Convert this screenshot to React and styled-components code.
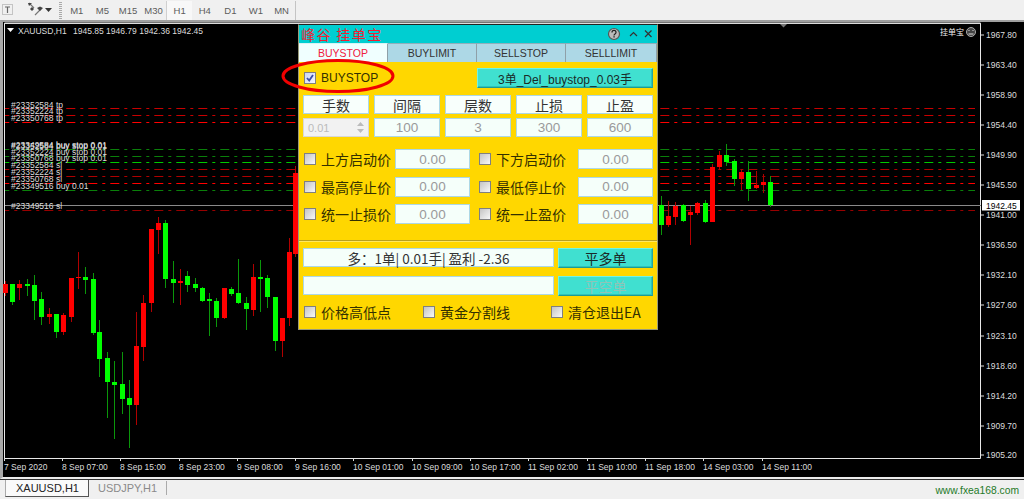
import React from 'react'
import styled, { createGlobalStyle } from 'styled-components'

const latin = '"Liberation Sans", "Noto Sans CJK SC", sans-serif'
const cjk = '"Noto Sans CJK SC", "Liberation Sans", sans-serif'

const Global = createGlobalStyle`
  html, body { margin: 0; padding: 0; background: #f0f0f0; }
  body { font-family: ${latin}; overflow: hidden; }
`

// x, body top, body bottom, wick top, wick bottom, colour
const candles = [
  [5, 284, 293, 281, 296, 'r'], [12, 284, 302, 284, 305, 'g'], [19, 284, 288, 280, 300, 'r'],
  [27, 284, 286, 279, 296, 'g'], [34, 285, 301, 275, 320, 'g'], [41, 299, 317, 292, 325, 'g'],
  [49, 314, 317, 308, 324, 'r'], [56, 314, 332, 314, 338, 'g'], [63, 315, 332, 313, 335, 'r'],
  [71, 278, 317, 278, 322, 'r'], [78, 277, 278, 252, 289, 'r'], [85, 277, 280, 267, 294, 'g'],
  [93, 279, 333, 273, 335, 'g'], [99, 332, 359, 320, 377, 'g'], [107, 358, 382, 352, 418, 'g'],
  [114, 382, 385, 361, 439, 'g'], [122, 384, 399, 352, 414, 'g'], [129, 398, 405, 380, 448, 'g'],
  [136, 346, 405, 312, 425, 'r'], [143, 303, 347, 295, 361, 'r'], [151, 229, 303, 229, 312, 'r'],
  [158, 223, 230, 217, 254, 'r'], [165, 223, 279, 220, 288, 'g'], [173, 279, 283, 261, 303, 'g'],
  [180, 281, 283, 269, 305, 'r'], [187, 276, 285, 271, 292, 'g'], [195, 284, 288, 278, 292, 'g'],
  [202, 288, 301, 287, 302, 'g'], [209, 299, 301, 293, 336, 'g'], [216, 301, 318, 298, 327, 'g'],
  [224, 288, 318, 288, 319, 'r'], [231, 289, 294, 287, 296, 'g'], [238, 293, 303, 259, 304, 'g'],
  [246, 303, 309, 297, 330, 'g'], [253, 277, 310, 264, 316, 'r'], [260, 277, 279, 260, 312, 'g'],
  [267, 278, 297, 275, 308, 'g'], [275, 297, 341, 297, 351, 'g'], [282, 318, 341, 318, 357, 'r'],
  [289, 252, 318, 238, 326, 'r'], [295, 173, 254, 166, 257, 'r'],
  [661, 205, 225, 196, 235, 'g'], [668, 216, 225, 201, 227, 'r'], [675, 206, 217, 202, 225, 'r'],
  [683, 205, 221, 204, 222, 'g'], [690, 212, 215, 206, 245, 'r'], [697, 203, 213, 202, 215, 'r'],
  [705, 203, 222, 200, 223, 'g'], [712, 167, 222, 164, 222, 'r'], [719, 155, 167, 151, 170, 'r'],
  [726, 155, 162, 144, 166, 'g'], [734, 161, 179, 159, 186, 'g'], [741, 172, 179, 169, 190, 'r'],
  [748, 172, 189, 161, 201, 'g'], [756, 185, 188, 171, 189, 'r'], [763, 182, 185, 174, 193, 'r'],
  [770, 182, 205, 176, 207, 'g'],
]

const orderLines = [
  [108.5, '#c80000'], [115.5, '#c80000'], [122.5, '#ff0000'],
  [149.5, '#0a800a'], [156.5, '#0a800a'], [162.5, '#00c800'],
  [169.5, '#b00000'], [176.5, '#b00000'], [183.5, '#ff0000'],
  [190.5, '#0a800a'], [210.5, '#980000'],
]

const orderLabels = [
  ['#23352584 tp', 107.5], ['#23352224 tp', 114], ['#23350768 tp', 120.5],
  ['#23349584 buy stop 0.01', 148], ['#23352584 buy stop 0.01', 148.5],
  ['#23352224 buy stop 0.01', 154.5], ['#23350768 buy stop 0.01', 161],
  ['#23352584 sl', 167.5], ['#23352224 sl', 174.5], ['#23350768 sl', 181.5],
  ['#23349516 buy 0.01', 188.5], ['#23349516 sl', 208.5],
]

const prices = [
  ['1967.80', 35], ['1963.40', 65], ['1958.90', 95], ['1954.40', 125], ['1949.90', 155],
  ['1945.50', 185], ['1941.00', 215], ['1936.50', 245], ['1932.10', 275], ['1927.60', 305],
  ['1923.10', 336], ['1918.60', 366], ['1914.20', 396], ['1909.70', 426], ['1905.20', 455],
]

const times = [
  ['7 Sep 2020', 4], ['8 Sep 07:00', 62], ['8 Sep 15:00', 120], ['8 Sep 23:00', 179],
  ['9 Sep 08:00', 237], ['9 Sep 16:00', 295], ['10 Sep 01:00', 353], ['10 Sep 09:00', 412],
  ['10 Sep 17:00', 470], ['11 Sep 02:00', 528], ['11 Sep 10:00', 587], ['11 Sep 18:00', 645],
  ['14 Sep 03:00', 703], ['14 Sep 11:00', 762],
]

const periods = ['M1', 'M5', 'M15', 'M30', 'H1', 'H4', 'D1', 'W1', 'MN']

export default function App() {
  return (
    <Page>
      <Global />
      <Toolbar>
        <ToolIcon width="24" height="20" viewBox="0 0 24 20">
          <rect x="2.5" y="4.5" width="10" height="10" fill="none" stroke="#999" strokeDasharray="1 1" />
          <path d="M5 7h5M7.5 7v6" stroke="#666" strokeWidth="1.2" fill="none" />
        </ToolIcon>
        <ToolIcon width="34" height="20" viewBox="0 0 34 20">
          <path d="M5 3l5 5M11 15l5-5" stroke="#777" strokeWidth="1.2" fill="none" />
          <path d="M4 3h4l-3 3zM13 8l3 3 3-3-3-1.5zM6 9l2 2 2-2-2-2z" fill="#444" />
          <path d="M21 8h7l-3.5 4z" fill="#333" />
        </ToolIcon>
        <Grip />
        {periods.map(p => <Period key={p} $active={p === 'H1'}>{p}</Period>)}
        <ToolEnd />
      </Toolbar>

      <Chart>
        <ChartSvg viewBox="3 22 1021 455">
          <path d="M4.5 23v435.5H980.5V23z" fill="none" stroke="#e8e8e8" />
          <path d="M4 23.5H981" stroke="#ddd" />
          {prices.map(([label, y]) => <path key={label} d={`M981 ${y}h3`} stroke="#ddd" />)}
          {times.map(([label, x]) => <path key={label} d={`M${x + 0.5} 458v3`} stroke="#ddd" />)}
          <path d="M7 28h7l-3.5 4z" fill="#fff" />
          <path d="M780 24h7l-3.5 3.5z" fill="#777" />

          {orderLines.map(([y, color]) => (
            <line key={y} x1="5" x2="975" y1={y} y2={y} stroke={color} strokeDasharray="9 5 3 5" strokeDashoffset="4.7" />
          ))}
          <line x1="5" x2="981" y1="205.5" y2="205.5" stroke="#8a8a8a" />

          {candles.map(([x, top, bottom, wickTop, wickBottom, c]) => (
            <g key={x}>
              <line x1={x + 0.5} x2={x + 0.5} y1={wickTop} y2={wickBottom} stroke={c === 'g' ? '#0a960a' : '#b00000'} />
              <rect x={x - 2} y={top} width="5" height={bottom - top} fill={c === 'g' ? '#00ff00' : '#ff0000'} />
            </g>
          ))}

          <ChartText x="18" y="33.5">XAUUSD,H1</ChartText>
          <ChartText x="73" y="33.5">1945.85 1946.79 1942.36 1942.45</ChartText>
          {orderLabels.map(([label, y]) => <ChartText key={label + y} x="11" y={y}>{label}</ChartText>)}
          {prices.map(([label, y]) => <ChartText key={label} x="986" y={y + 3}>{label}</ChartText>)}
          {times.map(([label, x]) => <ChartText key={label} x={x} y="470">{label}</ChartText>)}

          <rect x="982" y="200" width="38" height="10.5" fill="#fff" />
          <ChartText x="986" y="208.5" fill="#000">1942.45</ChartText>

          <SmallCjk x="940" y="35">挂单宝</SmallCjk>
          <circle cx="971" cy="32" r="4.5" fill="#444" stroke="#aaa" />
          <path d="M968.5 30.5h1M972.5 30.5h1M968.5 34h5" stroke="#ddd" fill="none" />
        </ChartSvg>
      </Chart>

      <Panel>
        <TitleBar>
          <Title>峰谷 挂单宝</Title>
          <WindowIcons width="50" height="18" viewBox="0 0 50 18">
            <circle cx="8" cy="9" r="5.5" fill="#bbb" stroke="#555" strokeWidth="1.2" />
            <path d="M6 7.4c0-2.6 4-2.6 4 0 0 1.6-2 1.5-2 3" fill="none" stroke="#222" strokeWidth="1.2" />
            <rect x="7.4" y="11.2" width="1.3" height="1.3" fill="#222" />
            <path d="M24 11l3.5-3.5L31 11" fill="none" stroke="#333" strokeWidth="1.2" />
            <path d="M39 5.5l6.5 6.5M45.5 5.5L39 12" fill="none" stroke="#333" strokeWidth="1.2" />
          </WindowIcons>
        </TitleBar>

        <Tabs>
          <Tab $active>BUYSTOP</Tab>
          <Tab>BUYLIMIT</Tab>
          <Tab>SELLSTOP</Tab>
          <Tab>SELLLIMIT</Tab>
        </Tabs>

        <Body>
          <TopRow>
            <CheckLabel $latin>
              <Box $checked>
                <svg width="10" height="10" viewBox="0 0 10 10">
                  <path d="M2 5l2.2 2.6L8 2" fill="none" stroke="#3c4fa8" strokeWidth="1.8" />
                </svg>
              </Box>
              BUYSTOP
            </CheckLabel>
            <TealButton $wide>3单_Del_buystop_0.03手</TealButton>
          </TopRow>

          <ParamGrid>
            {['手数', '间隔', '层数', '止损', '止盈'].map(t => <HeadCell key={t}>{t}</HeadCell>)}
            <Spinner>
              0.01
              <svg width="9" height="15" viewBox="0 0 9 15">
                <path d="M1 6l3.5-4L8 6zM1 9l3.5 4L8 9z" fill="#bbb" />
              </svg>
            </Spinner>
            {['100', '3', '300', '600'].map(v => <Field key={v}>{v}</Field>)}
          </ParamGrid>

          <Conditions>
            <CheckLabel><Box />上方启动价</CheckLabel>
            <Field>0.00</Field>
            <CheckLabel><Box />下方启动价</CheckLabel>
            <Field>0.00</Field>
            <CheckLabel><Box />最高停止价</CheckLabel>
            <Field>0.00</Field>
            <CheckLabel><Box />最低停止价</CheckLabel>
            <Field>0.00</Field>
            <CheckLabel><Box />统一止损价</CheckLabel>
            <Field>0.00</Field>
            <CheckLabel><Box />统一止盈价</CheckLabel>
            <Field>0.00</Field>
          </Conditions>

          <Divider />

          <StatusGrid>
            <Status>多：1单| 0.01手| 盈利 -2.36</Status>
            <TealButton>平多单</TealButton>
            <Status />
            <TealButton $disabled>平空单</TealButton>
          </StatusGrid>

          <BottomRow>
            <CheckLabel><Box />价格高低点</CheckLabel>
            <CheckLabel><Box />黄金分割线</CheckLabel>
            <CheckLabel><Box />清仓退出EA</CheckLabel>
          </BottomRow>
        </Body>
      </Panel>

      <Highlight width="120" height="40" viewBox="0 0 120 40">
        <ellipse cx="58" cy="18" rx="55" ry="15.5" fill="none" stroke="#f00000" strokeWidth="3" />
      </Highlight>

      <TabBar>
        <ChartTab>XAUUSD,H1</ChartTab>
        <OtherTab>USDJPY,H1</OtherTab>
        <Watermark>www.fxea168.com</Watermark>
      </TabBar>
    </Page>
  )
}

const Page = styled.div`
  position: relative;
  width: 1024px;
  height: 499px;
  display: flex;
  flex-direction: column;
  overflow: hidden;
`

const Toolbar = styled.div`
  height: 20px;
  flex: none;
  display: flex;
  align-items: center;
  background: #f0f0f0;
`

const ToolIcon = styled.svg`
  flex: none;
  display: block;
`

const Grip = styled.div`
  width: 3px;
  height: 17px;
  margin: 0 2px 0 1px;
  flex: none;
  background: repeating-linear-gradient(#aaa 0 1px, #f0f0f0 1px 2px);
`

const Period = styled.div`
  width: 25.6px;
  height: 19px;
  flex: none;
  box-sizing: border-box;
  display: flex;
  align-items: center;
  justify-content: center;
  font-size: 9.5px;
  color: #5c5c5c;
  background: ${p => (p.$active ? '#f8f8f8' : 'transparent')};
  border-left: ${p => (p.$active ? '1px solid #d0d0d0' : 'none')};
`

const ToolEnd = styled.div`
  width: 1px;
  height: 19px;
  margin-left: 1px;
  background: #c4c4c4;
`

const Chart = styled.div`
  height: 455px;
  flex: none;
  background: #000;
  border-top: 2px solid #a0a0a0;
  border-left: 3px solid #a8a8a8;
  border-bottom: 2px solid #ececec;
`

const ChartSvg = styled.svg`
  display: block;
  width: 1021px;
  height: 455px;
`

const ChartText = styled.text`
  font-family: ${latin};
  font-size: 8.5px;
  fill: ${p => p.fill || '#dcdcdc'};
`

const SmallCjk = styled.text`
  font-family: ${cjk};
  font-size: 8px;
  fill: #eee;
`

const Panel = styled.div`
  position: absolute;
  left: 298px;
  top: 24px;
  width: 360px;
  height: 306px;
  box-sizing: border-box;
  display: flex;
  flex-direction: column;
  background: #ffd700;
  border: 1px solid #9a9a7a;
  border-top-color: #222;
`

const TitleBar = styled.div`
  height: 18px;
  flex: none;
  display: flex;
  align-items: center;
  justify-content: space-between;
  padding: 0 1px 0 2px;
  background: #00ced1;
`

const Title = styled.div`
  font-family: ${cjk};
  font-size: 14px;
  line-height: 18px;
  letter-spacing: 1.4px;
  color: #f02030;
`

const WindowIcons = styled.svg`
  display: block;
`

const Tabs = styled.div`
  height: 19px;
  flex: none;
  display: grid;
  grid-template-columns: 89px 89px 89px 91px;
`

const Tab = styled.div`
  display: flex;
  align-items: center;
  justify-content: center;
  box-sizing: border-box;
  font-size: 10.5px;
  color: ${p => (p.$active ? '#f02040' : '#333')};
  background: ${p => (p.$active ? '#f0ffff' : '#add8e6')};
  border-right: 1px solid #8fa0a8;
  border-top: 1px solid ${p => (p.$active ? '#d8f4f4' : '#8fb0bc')};
`

const Body = styled.div`
  flex: 1;
  padding: 6px 4px 0;
  display: flex;
  flex-direction: column;
`

const TopRow = styled.div`
  height: 20px;
  display: flex;
  align-items: center;
  justify-content: space-between;
`

const CheckLabel = styled.div`
  display: flex;
  align-items: center;
  height: 20px;
  padding-left: 1px;
  font-family: ${p => (p.$latin ? latin : cjk)};
  font-size: ${p => (p.$latin ? '12px' : '14px')};
  white-space: nowrap;
  color: #333000;
`

const Box = styled.span`
  width: 12px;
  height: 12px;
  flex: none;
  margin-right: 5px;
  box-sizing: border-box;
  display: flex;
  align-items: center;
  justify-content: center;
  border: 1px solid #808080;
  background: ${p => (p.$checked ? 'linear-gradient(135deg, #c8d4f4, #f4f6ff)' : 'linear-gradient(135deg, #c4c4c4, #f8f8f8)')};
`

const TealButton = styled.div`
  width: ${p => (p.$wide ? '176px' : 'auto')};
  height: 20px;
  box-sizing: border-box;
  display: flex;
  align-items: center;
  justify-content: center;
  font-family: ${p => (p.$wide ? latin : cjk)};
  font-size: ${p => (p.$wide ? '12px' : '14px')};
  color: ${p => (p.$disabled ? '#8fc4b8' : '#1a2a28')};
  background: #40e0d0;
  border: 1px solid;
  border-color: #70f4e6 #20a8a0 #1c9c94 #70f4e6;
  box-shadow: inset -1px -1px 0 #30c4b8;
`

const ParamGrid = styled.div`
  margin-top: 7px;
  display: grid;
  grid-template-columns: repeat(5, 66px);
  grid-auto-rows: 19px;
  column-gap: 5px;
  row-gap: 4px;
`

const HeadCell = styled.div`
  box-sizing: border-box;
  display: flex;
  align-items: center;
  justify-content: center;
  font-family: ${cjk};
  font-size: 14px;
  color: #333;
  background: #f8fffc;
  border: 1px solid #add8e6;
`

const Field = styled.div`
  box-sizing: border-box;
  height: 100%;
  display: flex;
  align-items: center;
  justify-content: center;
  font-size: 13.5px;
  color: #9a9a9a;
  background: #f5fffa;
  border: 1px solid #add8e6;
`

const Spinner = styled.div`
  box-sizing: border-box;
  display: flex;
  align-items: center;
  justify-content: space-between;
  padding: 0 3px 0 4px;
  font-size: 11px;
  color: #bbb;
  background: #f2f2f2;
  border: 1px solid #d8d8d8;
`

const Conditions = styled.div`
  margin-top: 12px;
  display: grid;
  grid-template-columns: 92px 75px 8px 100px 75px;
  grid-auto-rows: 20px;
  row-gap: 7.5px;

  & > :nth-child(4n + 3) {
    grid-column: 4;
  }
`

const Divider = styled.div`
  margin: 16px -4px 7px;
  height: 1px;
  background: #b8a020;
  box-shadow: 0 1px 0 #ffe860;
`

const StatusGrid = styled.div`
  display: grid;
  grid-template-columns: 251px 95px;
  grid-auto-rows: 20px;
  column-gap: 4px;
  row-gap: 8px;
`

const Status = styled.div`
  box-sizing: border-box;
  height: 19px;
  display: flex;
  align-items: center;
  justify-content: center;
  font-family: ${cjk};
  font-size: 13.5px;
  color: #333;
  background: #f5fffa;
  border: 1px solid #add8e6;
`

const BottomRow = styled.div`
  margin-top: 6px;
  height: 20px;
  display: grid;
  grid-template-columns: 119px 128px auto;
  align-items: center;
`

const Highlight = styled.svg`
  position: absolute;
  left: 280px;
  top: 58px;
  pointer-events: none;
`

const TabBar = styled.div`
  height: 20px;
  flex: none;
  position: relative;
  box-sizing: border-box;
  display: flex;
  align-items: flex-start;
  padding-left: 5px;
  background: #f0f0f0;
  border-top: 1px solid #333;
`

const ChartTab = styled.div`
  width: 84px;
  height: 17px;
  box-sizing: border-box;
  padding-left: 10px;
  font-size: 11px;
  line-height: 16px;
  color: #222;
  background: #fafafa;
  border-right: 1px solid #555;
  border-bottom: 1px solid #555;
  border-left: 1px solid #aaa;
`

const OtherTab = styled.div`
  width: 78px;
  height: 14px;
  margin-top: 1px;
  box-sizing: border-box;
  padding-left: 9px;
  font-size: 11px;
  line-height: 15px;
  color: #8a8a8a;
  border-right: 1px solid #aaa;
`

const Watermark = styled.div`
  position: absolute;
  right: 5px;
  top: 3px;
  font-family: ${latin};
  font-size: 10.3px;
  line-height: 15px;
  color: #1e7a28;
`
